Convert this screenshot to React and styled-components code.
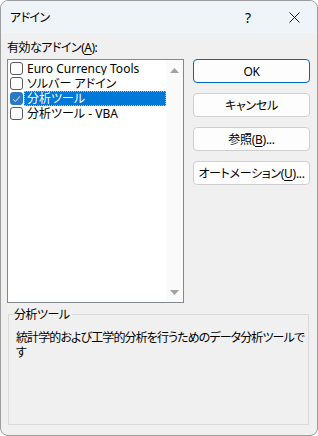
import React from "react";
import styled, { createGlobalStyle } from "styled-components";

const GlobalStyle = createGlobalStyle`
  html, body {
    margin: 0;
    padding: 0;
    background: #ffffff;
  }
  body {
    font-family: "Noto Sans", "Noto Sans CJK JP", sans-serif;
    font-size: 12px;
    color: #000;
    font-feature-settings: "palt";
  }
`;

const Window = styled.div`
  box-sizing: border-box;
  width: 318px;
  height: 436px;
  border: 1px solid #9c9c9c;
  border-radius: 8px;
  background: #f0f0f0;
  overflow: hidden;
  display: flex;
  flex-direction: column;
`;

const TitleBar = styled.div`
  height: 32px;
  flex: none;
  display: flex;
  align-items: center;
  background: #eff4f9;
`;

const Title = styled.div`
  flex: 1;
  padding-left: 9px;
  line-height: 15px;
  letter-spacing: -0.6px;
`;

const CaptionButton = styled.div`
  width: 46px;
  height: 32px;
  display: flex;
  align-items: center;
  justify-content: center;
  font-size: ${(p) => (p.$big ? "14px" : "12px")};
`;

const Content = styled.div`
  flex: 1;
  display: flex;
  flex-direction: column;
  padding: 7px 7px 10px 6px;
`;

const TopArea = styled.div`
  display: flex;
  align-items: flex-start;
`;

const LeftColumn = styled.div`
  display: flex;
  flex-direction: column;
  width: 177px;
`;

const FieldLabel = styled.div`
  line-height: 15px;
  height: 15px;
  margin-bottom: 4px;
  letter-spacing: -0.5px;
`;

const Key = styled.span`
  text-decoration: underline;
  text-underline-offset: 2px;
`;

const ListBox = styled.div`
  box-sizing: border-box;
  height: 244px;
  border: 1px solid #828790;
  background: #fff;
  display: flex;
`;

const Items = styled.div`
  flex: 1;
  padding-top: 1px;
`;

const Row = styled.div`
  display: flex;
  align-items: center;
  height: 15px;
  padding-left: 2px;
`;

const Box = styled.div`
  box-sizing: border-box;
  width: 13px;
  height: 13px;
  border: 1px solid ${(p) => (p.$checked ? "#2b78c6" : "#5c5c5c")};
  border-radius: 3px;
  background: ${(p) => (p.$checked ? "#2b78c6" : "#fff")};
  display: flex;
  align-items: center;
  justify-content: center;
  flex: none;
`;

const ItemText = styled.div`
  box-sizing: border-box;
  flex: 1;
  height: 15px;
  line-height: 13px;
  margin-left: 1px;
  padding-left: 2px;
  white-space: nowrap;
  overflow: hidden;
  background: ${(p) => (p.$selected ? "#0078d7" : "transparent")};
  color: ${(p) => (p.$selected ? "#fff" : "#000")};
  border: 1px ${(p) => (p.$selected ? "dotted #f5b070" : "solid transparent")};
`;

const ScrollBar = styled.div`
  width: 17px;
  flex: none;
  display: flex;
  flex-direction: column;
  align-items: center;
  justify-content: space-between;
  padding: 8px 0 7px;
  background: #fafafa;
`;

const Buttons = styled.div`
  display: flex;
  flex-direction: column;
  gap: 10px;
  margin-left: 9px;
  margin-top: 19px;
  width: 117px;
`;

const Button = styled.button`
  box-sizing: border-box;
  height: 24px;
  width: 100%;
  border: 1px solid ${(p) => (p.$primary ? "#0067c0" : "#d0d0d0")};
  border-radius: 4px;
  background: #fdfdfd;
  font: inherit;
  font-size: 12px;
  color: #000;
  padding: 0;
  letter-spacing: -0.3px;
`;

const Group = styled.fieldset`
  margin: 4px 1px 0 1px;
  flex: 1;
  border: 1px solid #dadada;
  padding: 8px 8px 0 7px;
  min-width: 0;
`;

const Legend = styled.legend`
  padding: 0 2px 0 0;
  margin-left: -2px;
  line-height: 15px;
  letter-spacing: -0.5px;
`;

const Description = styled.div`
  line-height: 15px;
  white-space: nowrap;
  letter-spacing: -0.9px;
`;

function Triangle({ up }) {
  return (
    <svg width="9" height="5" viewBox="0 0 9 5">
      <polygon points={up ? "4.5,0 9,5 0,5" : "0,0 9,0 4.5,5"} fill="#a3a3a3" />
    </svg>
  );
}

function Check() {
  return (
    <svg width="9" height="8" viewBox="0 0 9 8">
      <path d="M1 4.2 L3.4 6.5 L8 1.2" fill="none" stroke="#d9ecff" strokeWidth="1" />
    </svg>
  );
}

const addins = [
  { name: "Euro Currency Tools", checked: false },
  { name: "ソルバー アドイン", checked: false },
  { name: "分析ツール", checked: true, selected: true },
  { name: "分析ツール - VBA", checked: false },
];

export default function App() {
  return (
    <>
      <GlobalStyle />
      <Window>
        <TitleBar>
          <Title>アドイン</Title>
          <CaptionButton $big>?</CaptionButton>
          <CaptionButton>
            <svg width="11" height="11" viewBox="0 0 11 11">
              <path d="M0.5 0.5 L10.5 10.5 M10.5 0.5 L0.5 10.5" stroke="#1a1a1a" strokeWidth="1" />
            </svg>
          </CaptionButton>
        </TitleBar>
        <Content>
          <TopArea>
            <LeftColumn>
              <FieldLabel>
                有効なアドイン(<Key>A</Key>):
              </FieldLabel>
              <ListBox>
                <Items>
                  {addins.map((a) => (
                    <Row key={a.name}>
                      <Box $checked={a.checked}>{a.checked && <Check />}</Box>
                      <ItemText $selected={a.selected}>{a.name}</ItemText>
                    </Row>
                  ))}
                </Items>
                <ScrollBar>
                  <Triangle up />
                  <Triangle />
                </ScrollBar>
              </ListBox>
            </LeftColumn>
            <Buttons>
              <Button $primary>OK</Button>
              <Button>キャンセル</Button>
              <Button>
                参照(<Key>B</Key>)...
              </Button>
              <Button>
                オートメーション(<Key>U</Key>)...
              </Button>
            </Buttons>
          </TopArea>
          <Group>
            <Legend>分析ツール</Legend>
            <Description>
              統計学的および工学的分析を行うためのデータ分析ツールで
            </Description>
            <Description>す</Description>
          </Group>
        </Content>
      </Window>
    </>
  );
}
